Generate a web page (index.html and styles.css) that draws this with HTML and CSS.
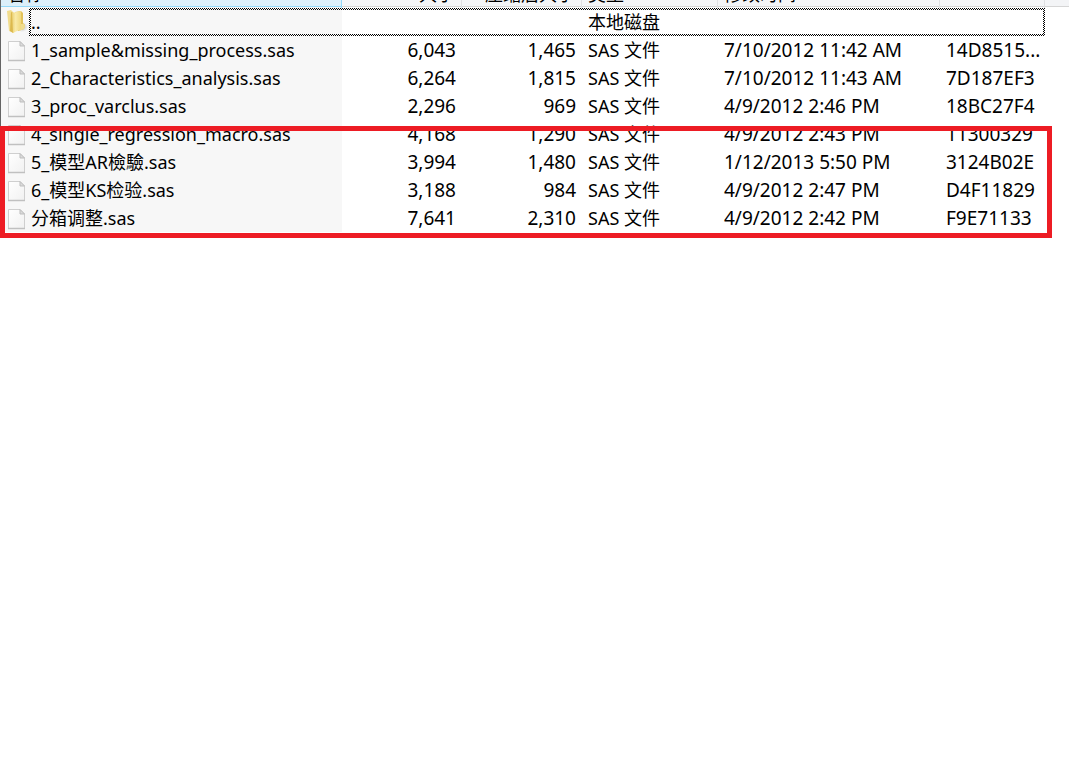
FILE: index.html
```html
<!DOCTYPE html>
<html lang="zh-CN">
<head>
    <meta charset="UTF-8">
    <meta name="viewport" content="width=device-width, initial-scale=1.0">
    <title>SAS 文件</title>
    <link rel="stylesheet" href="styles.css">
</head>
<body>
    <!-- Shared icons -->
    <svg class="sprite" aria-hidden="true">
        <defs>
            <linearGradient id="paper" x1="0" y1="0" x2="1" y2="1">
                <stop offset="0" stop-color="#ffffff"/>
                <stop offset="1" stop-color="#f1f1f1"/>
            </linearGradient>
            <linearGradient id="flap" x1="0" y1="0" x2="1" y2="0">
                <stop offset="0" stop-color="#ecd276"/>
                <stop offset="0.4" stop-color="#f9eaa8"/>
                <stop offset="1" stop-color="#f0d87c"/>
            </linearGradient>
            <radialGradient id="shade">
                <stop offset="0" stop-color="#b8b8b8"/>
                <stop offset="1" stop-color="#f7f7f7"/>
            </radialGradient>
            <symbol id="icon-file" viewBox="0 0 20 22">
                <path d="M2.5 1.5H14L18.5 6V20.5H2.5Z" fill="url(#paper)" stroke="#cfcfcf"/>
                <path d="M2 20.5H19" stroke="#c0c0c0" stroke-width="1.5"/>
                <path d="M14 1.5V6H18.5Z" fill="#dcdcdc" stroke="#bdbdbd"/>
            </symbol>
            <symbol id="icon-folder" viewBox="0 0 22 26">
                <ellipse cx="16" cy="18" rx="6" ry="5" fill="url(#shade)"/>
                <path d="M9 3L15 2L17 4V14L19 16L18 20L12 22Z" fill="#e2c25c"/>
                <path d="M14 15L18 15L19 17L18 20L13 22Z" fill="#efdc8e"/>
                <path d="M1 2L5 1L8 4V24L3 22Z" fill="#f1dc8c"/>
                <path d="M5 3L7 4V24L4 22Z" fill="#dcb94e"/>
                <path d="M6 4L15 2V20L7 24Z" fill="url(#flap)"/>
            </symbol>
        </defs>
    </svg>

    <main class="archive">
        <table class="files">
            <colgroup>
                <col class="col-name">
                <col class="col-size">
                <col class="col-packed">
                <col class="col-type">
                <col class="col-date">
                <col class="col-crc">
                <col>
            </colgroup>
            <thead>
                <tr>
                    <th class="sorted"><div>名称</div></th>
                    <th class="num"><div>大小</div></th>
                    <th class="num"><div>压缩后大小</div></th>
                    <th><div>类型</div></th>
                    <th><div>修改时间</div></th>
                    <th><div></div></th>
                    <th></th>
                </tr>
            </thead>
            <tbody>
                <tr class="focused">
                    <td><svg class="icon folder"><use href="#icon-folder"/></svg>..</td>
                    <td class="num"></td>
                    <td class="num"></td>
                    <td>本地磁盘</td>
                    <td class="date"></td>
                    <td class="crc"></td>
                    <td></td>
                </tr>
                <tr>
                    <td><svg class="icon"><use href="#icon-file"/></svg>1_sample&amp;missing_process.sas</td>
                    <td class="num">6,043</td>
                    <td class="num">1,465</td>
                    <td>SAS 文件</td>
                    <td class="date">7/10/2012 11:42 AM</td>
                    <td class="crc">14D8515...</td>
                    <td></td>
                </tr>
                <tr>
                    <td><svg class="icon"><use href="#icon-file"/></svg>2_Characteristics_analysis.sas</td>
                    <td class="num">6,264</td>
                    <td class="num">1,815</td>
                    <td>SAS 文件</td>
                    <td class="date">7/10/2012 11:43 AM</td>
                    <td class="crc">7D187EF3</td>
                    <td></td>
                </tr>
                <tr>
                    <td><svg class="icon"><use href="#icon-file"/></svg>3_proc_varclus.sas</td>
                    <td class="num">2,296</td>
                    <td class="num">969</td>
                    <td>SAS 文件</td>
                    <td class="date">4/9/2012 2:46 PM</td>
                    <td class="crc">18BC27F4</td>
                    <td></td>
                </tr>
                <tr>
                    <td><svg class="icon"><use href="#icon-file"/></svg>4_single_regression_macro.sas</td>
                    <td class="num">4,168</td>
                    <td class="num">1,290</td>
                    <td>SAS 文件</td>
                    <td class="date">4/9/2012 2:43 PM</td>
                    <td class="crc">11300329</td>
                    <td></td>
                </tr>
                <tr>
                    <td><svg class="icon"><use href="#icon-file"/></svg>5_模型AR檢驗.sas</td>
                    <td class="num">3,994</td>
                    <td class="num">1,480</td>
                    <td>SAS 文件</td>
                    <td class="date">1/12/2013 5:50 PM</td>
                    <td class="crc">3124B02E</td>
                    <td></td>
                </tr>
                <tr>
                    <td><svg class="icon"><use href="#icon-file"/></svg>6_模型KS检验.sas</td>
                    <td class="num">3,188</td>
                    <td class="num">984</td>
                    <td>SAS 文件</td>
                    <td class="date">4/9/2012 2:47 PM</td>
                    <td class="crc">D4F11829</td>
                    <td></td>
                </tr>
                <tr>
                    <td><svg class="icon"><use href="#icon-file"/></svg>分箱调整.sas</td>
                    <td class="num">7,641</td>
                    <td class="num">2,310</td>
                    <td>SAS 文件</td>
                    <td class="date">4/9/2012 2:42 PM</td>
                    <td class="crc">F9E71133</td>
                    <td></td>
                </tr>
            </tbody>
        </table>
        <div class="highlight"></div>
    </main>
</body>
</html>
```

FILE: styles.css
```css
*,
*::after {
    margin: 0;
    padding: 0;
    box-sizing: border-box;
}

body {
    font-family: "Noto Sans", "Noto Sans CJK SC", sans-serif;
    font-size: 18px;
    line-height: 28px;
    color: #000;
    background: #fff;
}

.sprite {
    position: absolute;
    width: 0;
    height: 0;
}

.archive {
    position: relative;
    min-height: 100vh;
    overflow: hidden;
}

.files {
    width: 100%;
    table-layout: fixed;
    border-collapse: separate;
    border-spacing: 0;
    border-left: 1px solid #646464;
}

.col-name {
    width: 341px;
}

.col-size {
    width: 120px;
}

.col-packed {
    width: 120px;
}

.col-type {
    width: 136px;
}

.col-date {
    width: 222px;
}

.col-crc {
    width: 105px;
}

/* header, scrolled almost out of view */
th {
    height: 8px;
    font-weight: normal;
    text-align: left;
    background: linear-gradient(#f3f4f6 6px, #d5d5d5 6px, #d5d5d5 7px, #fff 7px);
}

th div {
    display: flex;
    align-items: flex-end;
    height: 8px;
    padding: 0 6px;
    border-right: 1px solid #dfe0e2;
    overflow: hidden;
}

th.num div {
    justify-content: flex-end;
}

th.sorted {
    background: linear-gradient(#dceffa 6px, #96d9f9 6px, #96d9f9 7px, #f7f7f7 7px);
}

th.sorted div {
    border-right-color: #96d9f9;
}

td {
    height: 28px;
    padding: 0 6px;
    white-space: nowrap;
}

td:first-child {
    padding-left: 5px;
    background: #f7f7f7;
}

.num {
    text-align: right;
}

td.num,
.date,
.crc {
    font-size: 19px;
}

.icon {
    float: left;
    width: 20px;
    height: 22px;
    margin: 4px 5px 0 0;
}

.icon.folder {
    width: 22px;
    height: 26px;
    margin: 1px 3px 0 0;
}

.focused {
    position: relative;
}

/* dithered focus rectangle */
.focused td:first-child::after {
    content: "";
    position: absolute;
    top: 0;
    left: 28px;
    width: 1016px;
    height: 28px;
    padding: 2px;
    background: repeating-conic-gradient(#000 0 25%, #fff 0 50%) 0 0 / 2px 2px;
    mask: linear-gradient(#000 0 0) content-box exclude, linear-gradient(#000 0 0);
}

.highlight {
    position: absolute;
    top: 126px;
    left: 0;
    width: 1052px;
    height: 112px;
    border: 5px solid #ed1c24;
}
```
